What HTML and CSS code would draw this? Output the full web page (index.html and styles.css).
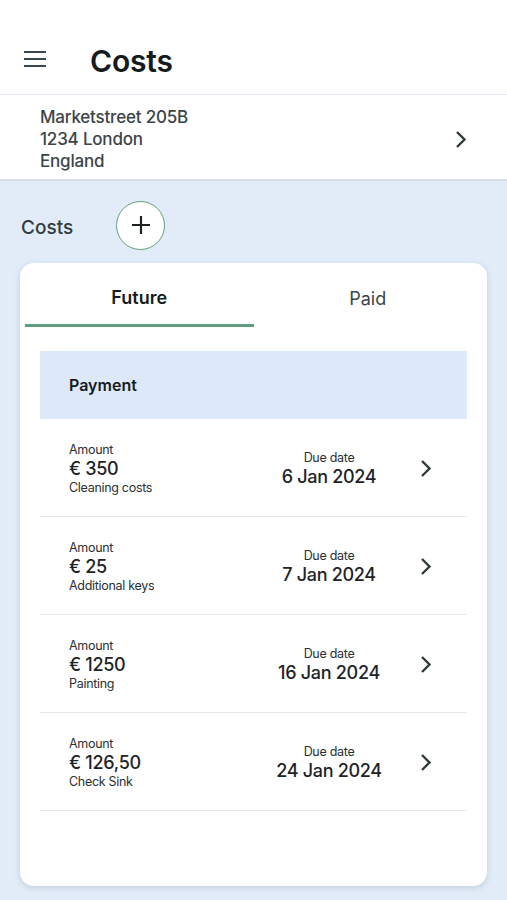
FILE: index.html
```html
<!DOCTYPE html>
<html lang="en">

<head>
    <meta charset="UTF-8">
    <meta name="viewport" content="width=device-width, initial-scale=1.0">
    <title>Costs</title>
    <link rel="stylesheet" href="styles.css">
</head>

<body>
    <header class="top_bar">
        <svg class="menu_icon" width="22" height="16" viewBox="0 0 22 16">
            <path d="M0 1h22M0 8h22M0 15h22" stroke="#37474f" stroke-width="2.2" />
        </svg>
        <h1>Costs</h1>
    </header>

    <div class="address">
        <div class="address_lines">
            <span>Marketstreet 205B</span>
            <span>1234 London</span>
            <span>England</span>
        </div>
        <svg class="chevron" width="12" height="19" viewBox="0 0 12 19">
            <path d="M2 2l7.5 7.5L2 17" fill="none" stroke="#2f3a3d" stroke-width="2.4" />
        </svg>
    </div>

    <main class="content">
        <div class="costs_head">
            <span>Costs</span>
            <button class="add_btn">
                <svg width="20" height="20" viewBox="0 0 20 20">
                    <path d="M10 1v18M1 10h18" stroke="#1d2224" stroke-width="2.2" />
                </svg>
            </button>
        </div>

        <div class="card">
            <div class="tabs">
                <div class="tab active">Future</div>
                <div class="tab">Paid</div>
            </div>

            <div class="table">
                <div class="table_head">Payment</div>

                <div class="row">
                    <div class="amount">
                        <small>Amount</small>
                        <strong>€ 350</strong>
                        <small>Cleaning costs</small>
                    </div>
                    <div class="due">
                        <small>Due date</small>
                        <strong>6 Jan 2024</strong>
                    </div>
                    <svg class="row_chevron" width="12" height="19" viewBox="0 0 12 19">
                        <path d="M2 2l7.5 7.5L2 17" fill="none" stroke="#2f3a3d" stroke-width="2.4" />
                    </svg>
                </div>

                <div class="row">
                    <div class="amount">
                        <small>Amount</small>
                        <strong>€ 25</strong>
                        <small>Additional keys</small>
                    </div>
                    <div class="due">
                        <small>Due date</small>
                        <strong>7 Jan 2024</strong>
                    </div>
                    <svg class="row_chevron" width="12" height="19" viewBox="0 0 12 19">
                        <path d="M2 2l7.5 7.5L2 17" fill="none" stroke="#2f3a3d" stroke-width="2.4" />
                    </svg>
                </div>

                <div class="row">
                    <div class="amount">
                        <small>Amount</small>
                        <strong>€ 1250</strong>
                        <small>Painting</small>
                    </div>
                    <div class="due">
                        <small>Due date</small>
                        <strong>16 Jan 2024</strong>
                    </div>
                    <svg class="row_chevron" width="12" height="19" viewBox="0 0 12 19">
                        <path d="M2 2l7.5 7.5L2 17" fill="none" stroke="#2f3a3d" stroke-width="2.4" />
                    </svg>
                </div>

                <div class="row">
                    <div class="amount">
                        <small>Amount</small>
                        <strong>€ 126,50</strong>
                        <small>Check Sink</small>
                    </div>
                    <div class="due">
                        <small>Due date</small>
                        <strong>24 Jan 2024</strong>
                    </div>
                    <svg class="row_chevron" width="12" height="19" viewBox="0 0 12 19">
                        <path d="M2 2l7.5 7.5L2 17" fill="none" stroke="#2f3a3d" stroke-width="2.4" />
                    </svg>
                </div>
            </div>
        </div>
    </main>
</body>

</html>
```

FILE: styles.css
```css
* {
    margin: 0;
    padding: 0;
    box-sizing: border-box;
}

body {
    font-family: "Inter", "Noto Sans", sans-serif;
    background: #e1ecf8;
    color: #1e2426;
    height: 900px;
    overflow: hidden;
}

.top_bar {
    height: 95px;
    background: #fff;
    border-bottom: 1px solid #e3ecf7;
    display: flex;
    align-items: center;
    padding: 28px 0 0 24px;
}

.menu_icon {
    margin-top: -4px;
}

.top_bar h1 {
    margin-left: 44px;
    font-size: 30px;
    font-weight: 600;
    letter-spacing: -0.2px;
    color: #161b1d;
}

.address {
    height: 86px;
    background: #fff;
    border-bottom: 2px solid #d5dde6;
    display: flex;
    align-items: center;
    justify-content: space-between;
    padding: 4px 40px 0 40px;
}

.address_lines {
    display: flex;
    flex-direction: column;
    font-size: 17px;
    font-weight: 500;
    line-height: 22px;
    color: #3b4548;
    letter-spacing: -0.2px;
}

.content {
    padding: 20px 20px 0 20px;
}

.costs_head {
    display: flex;
    align-items: center;
    height: 48px;
}

.costs_head span {
    font-size: 19px;
    font-weight: 500;
    color: #333d40;
    margin: 4px 0 0 1px;
    width: 95px;
}

.add_btn {
    width: 49px;
    height: 49px;
    border-radius: 50%;
    border: 1.5px solid #5f9e7c;
    background: #fff;
    display: flex;
    align-items: center;
    justify-content: center;
}

.card {
    margin-top: 14px;
    height: 623px;
    background: #fff;
    border-radius: 14px;
    box-shadow: 0 2px 6px rgba(60, 80, 110, 0.18);
    padding: 0 5px;
}

.tabs {
    display: flex;
    height: 64px;
}

.tab {
    flex: 1;
    display: flex;
    align-items: center;
    justify-content: center;
    font-size: 18px;
    color: #3b4548;
    padding-top: 6px;
}

.tab.active {
    font-weight: 600;
    color: #161b1d;
    border-bottom: 3px solid #5f9e7c;
    padding-top: 8px;
}

.table {
    margin: 24px 15px 0 15px;
}

.table_head {
    height: 68px;
    background: #dde9f8;
    display: flex;
    align-items: center;
    padding-left: 29px;
    font-size: 16px;
    font-weight: 600;
    color: #161b1d;
}

.row {
    height: 98px;
    border-bottom: 1.5px solid #e6e8ea;
    display: flex;
    align-items: center;
    padding: 0 29px;
}

.amount {
    display: flex;
    flex-direction: column;
    width: 190px;
    margin-top: 2px;
}

.amount small,
.due small {
    font-size: 12.5px;
    color: #2a3032;
    letter-spacing: -0.3px;
    line-height: 16px;
}

.amount strong {
    font-size: 18px;
    font-weight: 500;
    line-height: 22px;
    letter-spacing: -0.3px;
}

.due {
    display: flex;
    flex-direction: column;
    align-items: center;
    width: 140px;
    margin-top: 3px;
}

.due strong {
    font-size: 18px;
    font-weight: 500;
    line-height: 22px;
    letter-spacing: -0.3px;
}

.row_chevron {
    margin-left: auto;
    margin-right: 6px;
    margin-top: 2px;
}
```
